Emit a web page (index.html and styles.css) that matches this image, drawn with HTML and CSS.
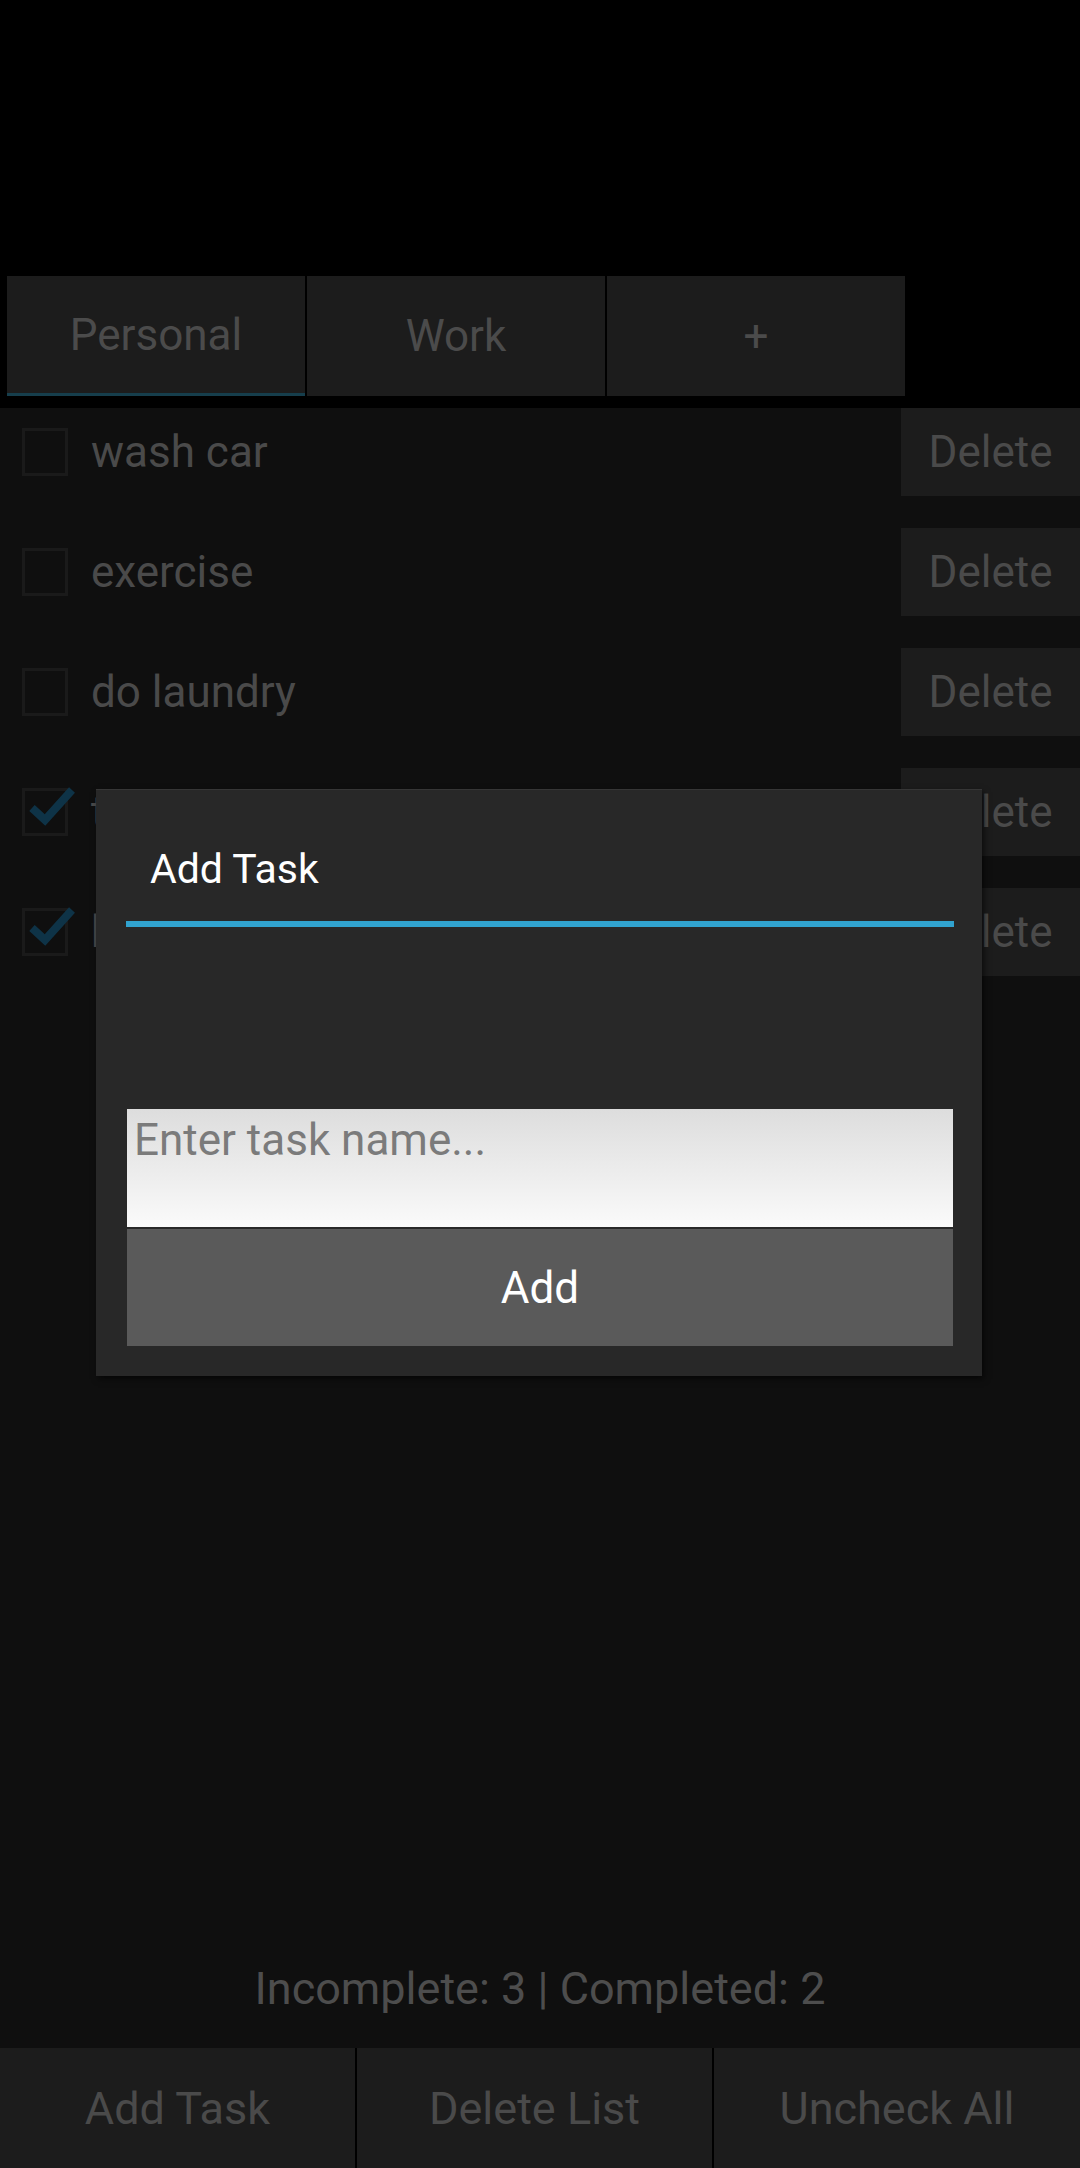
FILE: index.html
```html
<!DOCTYPE html>
<html lang="en">

<head>
    <meta charset="UTF-8">
    <meta name="viewport" content="width=device-width, initial-scale=1.0">
    <title>Tasks</title>
    <link rel="stylesheet" href="styles.css">
</head>

<body>
    <div class="screen">
        <div class="top-bar"></div>

        <div class="tabs">
            <div class="tab active">Personal</div>
            <div class="tab">Work</div>
            <div class="tab">+</div>
        </div>

        <div class="list">
            <div class="row">
                <span class="check"></span>
                <span class="task">wash car</span>
                <button class="delete">Delete</button>
            </div>
            <div class="row">
                <span class="check"></span>
                <span class="task">exercise</span>
                <button class="delete">Delete</button>
            </div>
            <div class="row">
                <span class="check"></span>
                <span class="task">do laundry</span>
                <button class="delete">Delete</button>
            </div>
            <div class="row">
                <span class="check checked">
                    <svg viewBox="0 0 48 48"><polyline points="10,20 23,32 50,2" /></svg>
                </span>
                <span class="task">take out trash</span>
                <button class="delete">Delete</button>
            </div>
            <div class="row">
                <span class="check checked">
                    <svg viewBox="0 0 48 48"><polyline points="10,20 23,32 50,2" /></svg>
                </span>
                <span class="task">buy groceries</span>
                <button class="delete">Delete</button>
            </div>

            <div class="status">Incomplete: 3 | Completed: 2</div>
        </div>

        <div class="bottom-bar">
            <button class="bar-btn">Add Task</button>
            <button class="bar-btn">Delete List</button>
            <button class="bar-btn wide">Uncheck All</button>
        </div>

        <!-- dialog on top of the dimmed list -->
        <div class="dialog">
            <div class="dialog-title">Add Task</div>
            <div class="dialog-line"></div>
            <div class="dialog-body">
                <textarea class="task-input" placeholder="Enter task name..."></textarea>
                <button class="add-btn">Add</button>
            </div>
        </div>
    </div>
</body>

</html>
```

FILE: styles.css
```css
* {
    margin: 0;
    padding: 0;
    box-sizing: border-box;
}

body {
    background: #000;
    font-family: Roboto, "Liberation Sans", sans-serif;
}

.screen {
    position: relative;
    width: 1080px;
    height: 2168px;
    display: flex;
    flex-direction: column;
    overflow: hidden;
}

.top-bar {
    height: 276px;
    background: #000;
}

.tabs {
    display: flex;
    gap: 2px;
    height: 120px;
    padding-left: 7px;
}

.tab {
    width: 298px;
    background: #1c1c1c;
    color: #4b4b4b;
    font-size: 44px;
    display: flex;
    align-items: center;
    justify-content: center;
}

.tab.active {
    border-bottom: 3px solid #163e4c;
}

.list {
    flex: 1;
    margin-top: 12px;
    background: #0f0f0f;
    display: flex;
    flex-direction: column;
}

.row {
    display: flex;
    align-items: center;
    height: 88px;
    margin-bottom: 32px;
}

.check {
    width: 46px;
    height: 48px;
    margin-left: 22px;
    border: 3px solid #1a1a1a;
    position: relative;
}

.check svg {
    position: absolute;
    left: -3px;
    top: -3px;
    width: 48px;
    height: 48px;
    overflow: visible;
}

.check polyline {
    fill: none;
    stroke: #0e3347;
    stroke-width: 8;
    stroke-linejoin: miter;
}

.task {
    margin-left: 23px;
    color: #4a4a4a;
    font-size: 44px;
}

.delete {
    margin-left: auto;
    width: 179px;
    height: 88px;
    border: none;
    background: #1c1c1c;
    color: #4a4a4a;
    font-family: inherit;
    font-size: 44px;
}

.status {
    margin-top: auto;
    height: 120px;
    display: flex;
    align-items: center;
    justify-content: center;
    color: #4d4d4d;
    font-size: 45px;
}

.bottom-bar {
    display: flex;
    gap: 2px;
    height: 120px;
}

.bar-btn {
    width: 355px;
    border: none;
    background: #1c1c1c;
    color: #4a4a4a;
    font-family: inherit;
    font-size: 45px;
}

.bar-btn.wide {
    flex: 1;
}

.dialog {
    position: absolute;
    left: 96px;
    top: 789px;
    width: 886px;
    height: 587px;
    background: #282828;
    border-top: 1px solid #363636;
    box-shadow: 2px 3px 6px rgba(0, 0, 0, 0.6);
}

.dialog-title {
    padding: 54px 0 0 54px;
    height: 131px;
    color: #fff;
    font-size: 41px;
    line-height: 50px;
}

.dialog-line {
    height: 6px;
    margin: 0 28px 0 30px;
    background: #31a3cf;
}

.dialog-body {
    padding: 182px 29px 0 31px;
}

.task-input {
    display: block;
    width: 100%;
    height: 118px;
    border: none;
    outline: none;
    resize: none;
    padding: 5px 7px;
    background: linear-gradient(#dddddd, #fafafa);
    font-family: inherit;
    font-size: 44px;
    line-height: 53px;
    color: #333;
}

.task-input::placeholder {
    color: #7b7b7b;
}

.add-btn {
    display: block;
    width: 100%;
    height: 117px;
    margin-top: 2px;
    border: none;
    background: #5a5a5a;
    color: #fff;
    font-family: inherit;
    font-size: 44px;
}
```
